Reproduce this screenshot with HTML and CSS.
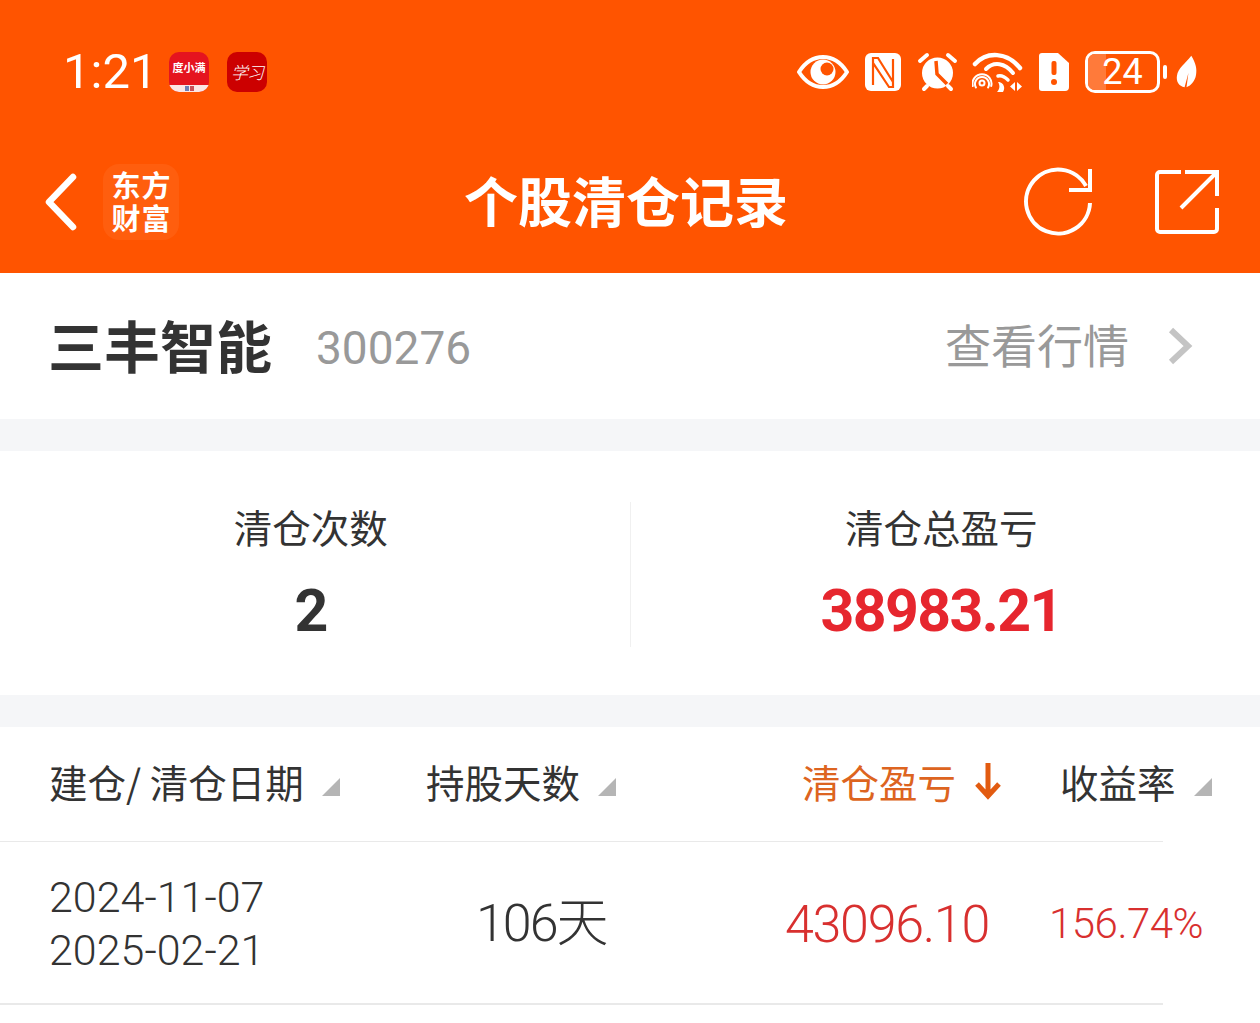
FILE: index.html
```html
<!DOCTYPE html>
<html lang="zh-CN">
<head>
    <meta charset="UTF-8">
    <meta name="viewport" content="width=device-width, initial-scale=1.0">
    <title>个股清仓记录</title>
    <link rel="stylesheet" href="styles.css">
</head>
<body>
    <div class="top">
        <div class="statusBar">
            <div class="statusLeft">
                <span class="time">1:21</span>
                <div class="appIcon duxiaoman">
                    <span class="dxmName">度小满</span>
                    <span class="dxmFoot"><i></i><i class="dxmRed"></i></span>
                </div>
                <div class="appIcon xuexi">学习</div>
            </div>
            <div class="statusRight">
                <svg class="sEye" viewBox="0 0 52 36"><path d="M2 18C9 7 17 3 26 3s17 4 24 15c-7 11-15 15-24 15S9 29 2 18z" fill="none" stroke="#fff" stroke-width="4" stroke-linejoin="round"/><circle cx="26" cy="18" r="12.500" fill="#fff"/><circle cx="30" cy="15" r="6.500" fill="#ff5400"/></svg>
                <svg class="sNfc" viewBox="0 0 36 38"><rect width="36" height="38" rx="6" fill="#fff"/><path d="M8 32V10l16 24h4V6M8 10V5h5l15 24" fill="none" stroke="#ff5400" stroke-width="2.200"/></svg>
                <svg class="sAlarm" viewBox="0 0 42 40"><circle cx="20.500" cy="21" r="15.500" fill="#fff"/><path d="M19 9l1 13 10 10" fill="none" stroke="#ff5400" stroke-width="3.500"/><path d="M3 9l7-6M38 9l-7-6M7 37l3-3M34 37l-3-3" fill="none" stroke="#fff" stroke-width="4" stroke-linecap="round"/></svg>
                <svg class="sWifi" viewBox="0 0 52 40"><g fill="none" stroke="#fff" stroke-linecap="round"><path d="M3 12C15-1 35 0 48 16" stroke-width="4.500"/><path d="M14 17C22 9 33 11 41 21" stroke-width="4"/><path d="M26 24C30 23 33 25 36 28" stroke-width="3.500"/><circle cx="10" cy="31" r="2.500" stroke-width="2"/><path d="M3.900 35.500a7 7 0 1 1 12.200 0M0.800 34a9.500 9.500 0 1 1 18.400 0" stroke-width="2"/></g><path d="M26 30c5 0 8 5 5 10h-6c3-3 3-7 1-10zM43 30v9l-5-4.500zM45 30v9l5-4.500z" fill="#fff"/></svg>
                <svg class="sSim" viewBox="0 0 30 38"><path d="M3 0h16l11 10v24a4 4 0 0 1-4 4H3a3 3 0 0 1-3-3V3a3 3 0 0 1 3-3z" fill="#fff"/><rect x="12.500" y="8" width="5" height="14" rx="2" fill="#ff5400"/><circle cx="15" cy="29" r="3" fill="#ff5400"/></svg>
                <div class="battery">
                    <div class="batteryBody"><span class="batteryFill"></span><span class="batteryText">24</span></div>
                    <span class="batteryCap"></span>
                </div>
                <svg class="sLeaf" viewBox="0 0 22 34"><path d="M16 0c5 8 6 14 5 20-1 7-6 12-10 13l2-15-4 15C3 32 0 27 1 21 2 13 10 8 16 0z" fill="#fff"/></svg>
            </div>
        </div>
        <div class="navBar">
            <div class="navLeft">
                <svg class="backIcon" viewBox="0 0 34 58"><path d="M29 4L5 29l24 25" fill="none" stroke="#fff" stroke-width="6.500" stroke-linecap="round" stroke-linejoin="round"/></svg>
                <div class="logo">东方<br>财富</div>
            </div>
            <div class="navTitle">个股清仓记录</div>
            <div class="navRight">
                <svg class="refreshIcon" viewBox="0 0 70 70"><path d="M66 36A32 32 0 1 1 62 19" fill="none" stroke="#fff" stroke-width="4"/><path d="M66 2v21H45" fill="none" stroke="#fff" stroke-width="4"/></svg>
                <svg class="shareIcon" viewBox="0 0 66 66"><path d="M27 3H6a3 3 0 0 0-3 3v54a3 3 0 0 0 3 3h54a3 3 0 0 0 3-3V39M31 3h32v24M63 3L27 39" fill="none" stroke="#fff" stroke-width="4"/></svg>
            </div>
        </div>
    </div>

    <div class="stockRow">
        <div class="stockName">三丰智能</div>
        <div class="stockCode">300276</div>
        <div class="quoteLink">查看行情</div>
        <svg class="quoteArrow" viewBox="0 0 26 38"><path d="M4 3l17 16L4 35" fill="none" stroke="#c4c4c4" stroke-width="6"/></svg>
    </div>

    <div class="summary">
        <div class="sumCell">
            <div class="sumLabel">清仓次数</div>
            <div class="sumValue">2</div>
        </div>
        <div class="sumCell">
            <div class="sumLabel">清仓总盈亏</div>
            <div class="sumValue red">38983.21</div>
        </div>
    </div>

    <div class="tableHead">
        <div class="col colDate">建仓/ 清仓日期<span class="sortMark"></span></div>
        <div class="col colDays">持股天数<span class="sortMark"></span></div>
        <div class="col colProfit active">清仓盈亏
            <svg class="sortArrow" viewBox="0 0 28 38"><path d="M14 1v33M3 22l11 12 11-12" fill="none" stroke="#e25b10" stroke-width="5"/></svg>
        </div>
        <div class="col colRate">收益率<span class="sortMark"></span></div>
    </div>

    <div class="tableRow">
        <div class="colDate dates"><span>2024-11-07</span><span>2025-02-21</span></div>
        <div class="colDays days">106<span class="dayUnit">天</span></div>
        <div class="colProfit profit">43096.10</div>
        <div class="colRate rate">156.74%</div>
    </div>
</body>
</html>
```
FILE: styles.css
```css
:root{
    --orange: #ff5400;
    --text: #333333;
    --gap: #f5f6f8;
    --line: #e9e9e9;
    --red: #e6262e;
    --rowRed: #d8302f;
}
*{
    box-sizing: border-box;
}
html, body{
    height: 100%;
}
body{
    margin: 0;
    background: #ffffff;
    color: var(--text);
    font-family: "Roboto", "Noto Sans CJK SC", sans-serif;
    overflow: hidden;
}
.top{
    height: 273px;
    background: var(--orange);
    color: #ffffff;
}
.statusBar{
    height: 145px;
    padding: 0 63px 2px 63px;
    display: flex;
    align-items: center;
    justify-content: space-between;
}
.statusLeft{
    display: flex;
    align-items: center;
}
.time{
    font-size: 49px;
    width: 106px;
}
.appIcon{
    width: 40px;
    height: 40px;
    border-radius: 10px;
    overflow: hidden;
    display: flex;
    flex-direction: column;
}
.duxiaoman{
    background: #e5141f;
    margin-right: 18px;
}
.dxmName{
    flex: 1;
    font-size: 11px;
    font-weight: 700;
    text-align: center;
    line-height: 33px;
    white-space: nowrap;
}
.dxmFoot{
    height: 11px;
    background: #fbe6e6;
    display: flex;
    justify-content: center;
    align-items: center;
    gap: 1px;
}
.dxmFoot i{
    width: 4px;
    height: 5px;
    background: #6d7fb5;
}
.dxmFoot .dxmRed{
    background: #c8505a;
}
.xuexi{
    background: #cc0000;
    flex-direction: row;
    align-items: center;
    justify-content: center;
    font-size: 17px;
    font-weight: 300;
    font-style: italic;
    letter-spacing: -1px;
    white-space: nowrap;
}
.statusRight{
    display: flex;
    align-items: center;
}
.sEye{
    width: 52px;
    height: 36px;
    margin-right: 16px;
}
.sNfc{
    width: 36px;
    height: 38px;
    margin-right: 16px;
}
.sAlarm{
    width: 42px;
    height: 40px;
    margin-right: 13px;
}
.sWifi{
    width: 52px;
    height: 40px;
    margin-right: 15px;
}
.sSim{
    width: 30px;
    height: 38px;
    margin-right: 16px;
}
.battery{
    display: flex;
    align-items: center;
    margin-right: 9px;
}
.batteryBody{
    position: relative;
    width: 75px;
    height: 42px;
    border: 3px solid #ffffff;
    border-radius: 10px;
    overflow: hidden;
    text-align: center;
}
.batteryFill{
    position: absolute;
    left: 0;
    top: 0;
    bottom: 0;
    width: 18px;
    background: #ff7a3a;
}
.batteryText{
    position: relative;
    font-size: 36px;
    line-height: 36px;
    display: block;
}
.batteryCap{
    width: 4px;
    height: 14px;
    margin-left: 3px;
    border-radius: 2px;
    background: #ffffff;
}
.sLeaf{
    width: 21px;
    height: 34px;
}
.navBar{
    position: relative;
    height: 128px;
    padding: 0 40px 15px 44px;
    display: flex;
    align-items: center;
    justify-content: space-between;
}
.navLeft{
    display: flex;
    align-items: center;
}
.backIcon{
    width: 34px;
    height: 58px;
    margin-right: 25px;
}
.logo{
    width: 76px;
    height: 76px;
    border-radius: 16px;
    background: #ff5e0e;
    padding: 7px 0 0 1px;
    text-align: center;
    font-family: "Liberation Sans", "Noto Sans CJK SC", sans-serif;
    font-size: 29px;
    font-weight: 700;
    line-height: 33.500px;
    letter-spacing: 1px;
}
.navTitle{
    position: absolute;
    left: 0;
    right: 8px;
    top: 19px;
    text-align: center;
    font-family: "Noto Sans CJK SC", sans-serif;
    font-size: 54px;
    font-weight: 700;
    line-height: 72px;
}
.navRight{
    display: flex;
    align-items: center;
    gap: 60px;
}
.refreshIcon{
    width: 70px;
    height: 70px;
}
.shareIcon{
    width: 66px;
    height: 66px;
}
.stockRow{
    height: 146px;
    padding: 0 67px 0 48px;
    display: flex;
    align-items: center;
}
.stockName{
    font-family: "Noto Sans CJK SC", sans-serif;
    font-size: 56px;
    font-weight: 700;
    margin-right: 44px;
    padding-bottom: 6px;
}
.stockCode{
    font-size: 46px;
    color: #999999;
    flex: 1;
    padding-top: 4px;
}
.quoteLink{
    font-family: "Noto Sans CJK SC", sans-serif;
    font-size: 46px;
    color: #999999;
    margin-right: 38px;
    padding-bottom: 6px;
}
.quoteArrow{
    width: 26px;
    height: 38px;
}
.summary{
    height: 308px;
    border-top: 32px solid var(--gap);
    border-bottom: 32px solid var(--gap);
    padding: 51px 0 48px;
    display: flex;
}
.sumCell{
    flex: 1;
    padding-right: 8px;
    text-align: center;
}
.sumCell + .sumCell{
    border-left: 1px solid #f0f0f0;
}
.sumLabel{
    font-family: "Noto Sans CJK SC", sans-serif;
    font-size: 38.500px;
    line-height: 48px;
}
.sumValue{
    font-size: 59px;
    font-weight: 700;
    letter-spacing: -1.600px;
    line-height: 70px;
    margin-top: 26px;
}
.red{
    color: var(--red);
}
.tableHead{
    width: 1163px;
    height: 115px;
    border-bottom: 1px solid var(--line);
    display: flex;
    align-items: center;
    font-family: "Noto Sans CJK SC", sans-serif;
    font-size: 38.500px;
    padding-bottom: 7px;
}
.col{
    display: flex;
    align-items: center;
    white-space: nowrap;
}
.colDate{
    flex: none;
    width: 426px;
    padding-left: 49px;
}
.colDays{
    flex: none;
    width: 376px;
}
.colProfit{
    flex: none;
    width: 258px;
}
.colRate{
    flex: none;
}
.active{
    color: #dd6420;
}
.sortMark{
    width: 0;
    height: 0;
    margin: 12px 0 0 18px;
    border-style: solid;
    border-width: 0 0 18px 18px;
    border-color: transparent transparent #b5b5b5 transparent;
}
.sortArrow{
    width: 28px;
    height: 38px;
    margin-left: 18px;
}
.tableRow{
    width: 1163px;
    height: 163px;
    border-bottom: 2px solid var(--line);
    display: flex;
    align-items: center;
}
.dates{
    display: flex;
    flex-direction: column;
    padding-top: 2px;
    font-size: 43px;
    font-weight: 300;
    line-height: 53px;
}
.tableRow .days{
    width: 358px;
    padding-left: 50px;
    padding-bottom: 8px;
    font-size: 52px;
    font-weight: 300;
    letter-spacing: -2px;
    white-space: nowrap;
}
.dayUnit{
    letter-spacing: 0;
}
.tableRow .profit{
    width: 265px;
    padding-left: 1px;
    padding-top: 4px;
    color: var(--rowRed);
    font-size: 52px;
    font-weight: 300;
    letter-spacing: -1.300px;
}
.rate{
    padding-top: 2px;
    color: var(--rowRed);
    font-size: 42px;
    font-weight: 300;
    letter-spacing: -0.500px;
    white-space: nowrap;
}
```
